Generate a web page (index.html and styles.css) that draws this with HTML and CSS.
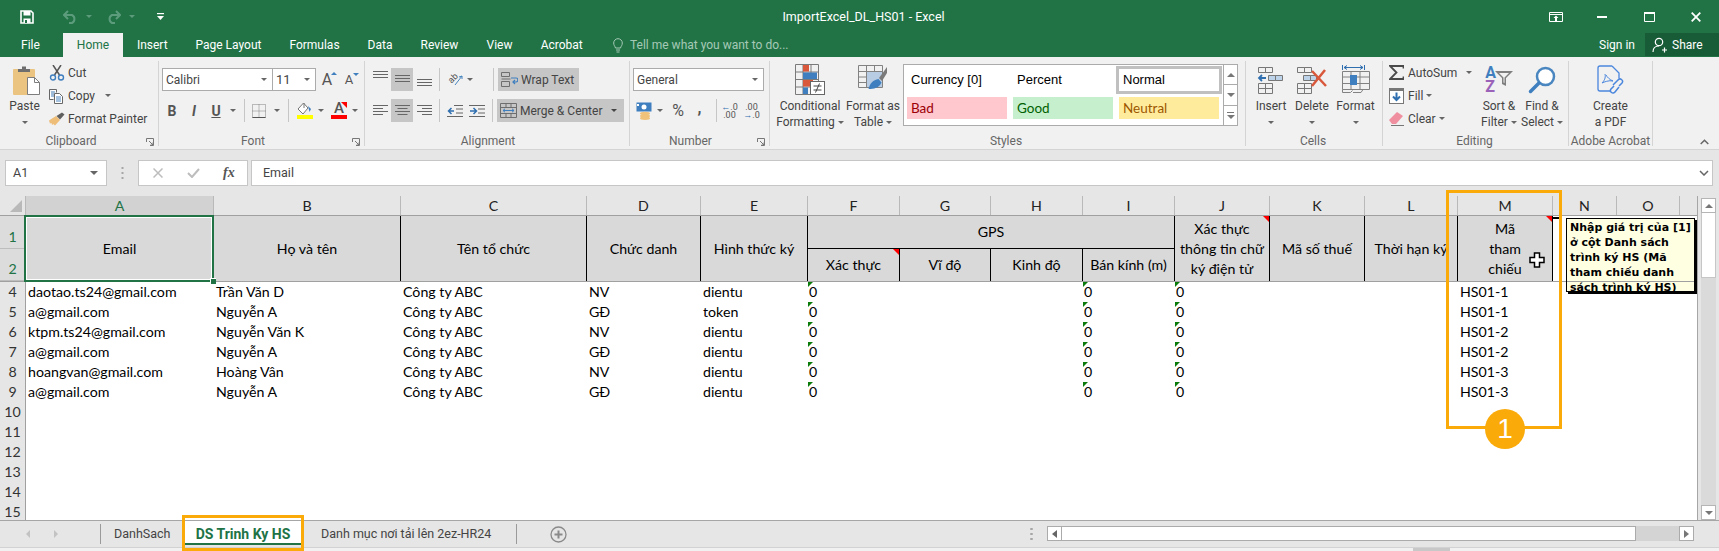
FILE: index.html
```html
<!DOCTYPE html>
<html lang="vi">
<head>
<meta charset="utf-8">
<title>ImportExcel_DL_HS01 - Excel</title>
<link rel="stylesheet" href="styles.css">
</head>
<body>
<div class="page">
  <header class="titlebar">
    <div class="qat">
      <svg class="i-save" width="14" height="14" viewBox="0 0 14 14"><path d="M1 1h10l2 2v10H1z" fill="none" stroke="#fff" stroke-width="1.6"/><rect x="3.5" y="1" width="7" height="4.5" fill="#fff"/><rect x="3.5" y="8.5" width="7" height="4.5" fill="#fff"/><rect x="5" y="10" width="2" height="3" fill="#217346"/></svg>
      <svg class="i-undo" width="15" height="14" viewBox="0 0 15 14"><path d="M5 1 1 5l4 4M1.5 5H9a4.5 4.5 0 0 1 0 8H6" fill="none" stroke="#5c9c7c" stroke-width="2"/></svg>
      <span class="caret dim"></span>
      <svg class="i-redo" width="15" height="14" viewBox="0 0 15 14"><path d="M10 1l4 4-4 4M13.500 5H6a4.500 4.500 0 0 0 0 8h3" fill="none" stroke="#5c9c7c" stroke-width="2"/></svg>
      <span class="caret dim"></span>
      <svg class="i-custom" width="7" height="7" viewBox="0 0 7 7"><rect x="0" y="0" width="7" height="1.200" fill="#fff"/><path d="M0 3h7L3.500 7z" fill="#fff"/></svg>
    </div>
    <div class="doc-title">ImportExcel_DL_HS01 - Excel</div>
    <div class="winctl">
      <svg class="w-display" width="14" height="10" viewBox="0 0 14 10"><path d="M.5.500h13v9H.5zM.5 2.500h13" fill="none" stroke="#fff"/><path d="M7 3.500 4.500 6H6v3h2V6h1.500z" fill="#fff"/></svg>
      <svg class="w-min" width="10" height="2" viewBox="0 0 10 2"><rect width="10" height="2" fill="#fff"/></svg>
      <svg class="w-max" width="11" height="10" viewBox="0 0 11 10"><path d="M.5.500h10v9H.5z" fill="none" stroke="#fff"/><rect width="11" height="2" fill="#fff"/></svg>
      <svg class="w-close" width="10" height="10" viewBox="0 0 10 10"><path d="M.7.700l8.600 8.600M9.300.700.700 9.300" stroke="#fff" stroke-width="1.800"/></svg>
    </div>
  </header>

  <nav class="tabbar">
    <span class="rtab t-file">File</span>
    <span class="rtab t-home">Home</span>
    <span class="rtab t-ins">Insert</span>
    <span class="rtab t-page">Page Layout</span>
    <span class="rtab t-form">Formulas</span>
    <span class="rtab t-data">Data</span>
    <span class="rtab t-rev">Review</span>
    <span class="rtab t-view">View</span>
    <span class="rtab t-acro">Acrobat</span>
    <span class="tellme">
      <svg width="10" height="15" viewBox="0 0 10 15"><path d="M2.500 10C2 8 .7 7.500.7 5a4.300 4.300 0 0 1 8.600 0c0 2.500-1.300 3-1.800 5zM3 12h4M3.500 14h3" fill="none" stroke="#a6c9b6"/></svg>
      Tell me what you want to do...
    </span>
    <span class="signin">Sign in</span>
    <span class="share">
      <svg width="16" height="16" viewBox="0 0 16 16"><circle cx="7" cy="5" r="3.700" fill="none" stroke="#fff" stroke-width="1.200"/><path d="M1 15c0-4 2.500-6 6-6M10 13h5M12.500 10.500v5" fill="none" stroke="#fff" stroke-width="1.200"/></svg>
      Share
    </span>
  </nav>

  <section class="ribbon">
    <div class="group g-clip">
      <div class="gbody">
        <div class="lbtn b-paste">
          <div class="licon">
            <svg width="28" height="30" viewBox="0 0 28 30"><rect x="0" y="4" width="22" height="26" rx="1" fill="#ecc482"/><path d="M5 7V4h4V1.500h4V4h4v3z" fill="#6e6e6e"/><path d="M14.500 12.500h7l5 5v12h-12z" fill="#fff" stroke="#7d7d7d"/><path d="M21.500 12.500v5h5" fill="none" stroke="#7d7d7d"/></svg>
          </div>
          <div class="ltext">Paste</div>
          <div class="ltext"><span class="caret"></span></div>
        </div>
        <div class="stack s-clip">
          <div class="sbtn"><svg width="16" height="16" viewBox="0 0 16 16"><path d="M4 0l6.500 10M12 0 5.500 10" stroke="#555" stroke-width="1.500" fill="none"/><circle cx="4" cy="12.500" r="2.500" fill="none" stroke="#3f7fbf" stroke-width="1.400"/><circle cx="12" cy="12.500" r="2.500" fill="none" stroke="#3f7fbf" stroke-width="1.400"/></svg><span>Cut</span></div>
          <div class="sbtn"><svg width="16" height="16" viewBox="0 0 16 16"><path d="M.5 1.500h7v3M.5 1.500v10h4" fill="#fff" stroke="#666"/><path d="M5.500 5.500h5l3 3v7h-8z" fill="#fff" stroke="#666"/><path d="M7 9h5M7 11h5M7 13h5M2 4h4M2 6h3M2 8h3" stroke="#4a86c0"/></svg><span>Copy</span><span class="caret c-copy"></span></div>
          <div class="sbtn"><svg width="16" height="14" viewBox="0 0 16 14"><path d="M0 8.500 7 4l4 4-5 5.500C5 13 4.500 12 4.500 12L3 13 2.500 11 1 11.500z" fill="#eebd77"/><path d="M7.500 4 11 7.500 15.500 2.500 13 .5z" fill="#5f5f5f"/></svg><span>Format Painter</span></div>
        </div>
      </div>
      <div class="glabel p16">Clipboard<svg class="launcher" width="8" height="8" viewBox="0 0 8 8"><path d="M.5 4V.5H7.500V7.500H4M3 3l4 4M4.500 7h2.500V4.500" fill="none" stroke="#777"/></svg></div>
    </div>

    <div class="group g-font">
      <div class="gbody col">
        <div class="frow">
          <div class="combo w-font">Calibri<span class="caret"></span></div>
          <div class="combo w-size">11<span class="caret"></span></div>
          <span class="bigA a-grow">A<i class="tip up"></i></span>
          <span class="bigA a-shrink">A<i class="tip down"></i></span>
        </div>
        <div class="frow r2">
          <b class="fmt f1">B</b>
          <i class="fmt f1 it">I</i>
          <u class="fmt f1">U</u>
          <span class="cslot"><span class="caret"></span></span>
          <span class="vsep s-a"></span>
          <svg class="i-border" width="14" height="14" viewBox="0 0 14 14"><path d="M.5.500h13v13H.5zM7 .5v13M.5 7h13" fill="none" stroke="#808080" stroke-dasharray="1 1"/><path d="M.5 13.500h13" stroke="#555"/></svg>
          <span class="cslot c-b"><span class="caret"></span></span>
          <span class="vsep s-b"></span>
          <span class="colored c-fill"><svg width="16" height="12" viewBox="0 0 16 12"><path d="M6.500 0 1 6l5 5 5-6z" fill="#fff" stroke="#777"/><path d="M7 0v5" stroke="#777"/><path d="M11 3l3 3-1.500 3z" fill="#3f7fbf"/></svg><i class="bar yellow"></i></span>
          <span class="cslot c-c"><span class="caret"></span></span>
          <span class="colored c-txt"><span class="uA">A</span><i class="bar red"></i></span>
          <span class="cslot c-c"><span class="caret"></span></span>
        </div>
      </div>
      <div class="glabel p17">Font<svg class="launcher" width="8" height="8" viewBox="0 0 8 8"><path d="M.5 4V.5H7.500V7.500H4M3 3l4 4M4.500 7h2.500V4.500" fill="none" stroke="#777"/></svg></div>
    </div>

    <div class="group g-align">
      <div class="gbody col">
        <div class="arow">
          <span class="abtn"><svg width="15" height="9" viewBox="0 0 15 9" class="top"><path d="M0 .5h15M0 3.500h15M0 6.500h15" stroke="#666"/></svg></span>
          <span class="abtn on"><svg width="15" height="9" viewBox="0 0 15 9"><path d="M0 .5h15M0 3.500h15M0 6.500h15" stroke="#666"/></svg></span>
          <span class="abtn"><svg width="15" height="9" viewBox="0 0 15 9" class="bot"><path d="M0 .5h15M0 3.500h15M0 6.500h15" stroke="#666"/></svg></span>
          <span class="vsep s-c"></span>
          <span class="orient"><span class="ab">ab</span><svg width="16" height="15" viewBox="0 0 16 15"><path d="M8 13 15 4M15 4l-3 1M15 4v3" fill="none" stroke="#4a86c0"/></svg></span>
          <span class="cslot c-o"><span class="caret"></span></span>
          <span class="vsep s-d"></span>
          <span class="greybtn wrapb"><svg width="17" height="15" viewBox="0 0 17 15"><path d="M.5.500h8v4h-8zM.5 9.500h8v5h-8zM.5 7h9" fill="none" stroke="#6e6e6e"/><path d="M10 6h5c2.500 0 2.500 4 0 4h-3m2-2-2 2 2 2" fill="none" stroke="#3f7fbf" stroke-width="1.200"/></svg>Wrap Text</span>
        </div>
        <div class="arow r2">
          <span class="abtn"><svg width="15" height="11" viewBox="0 0 15 11"><path d="M0 .5h15M0 3.500h10M0 6.500h15M0 9.500h10" stroke="#666"/></svg></span>
          <span class="abtn on"><svg width="15" height="11" viewBox="0 0 15 11"><path d="M0 .5h15M2.500 3.500h10M0 6.500h15M2.500 9.500h10" stroke="#666"/></svg></span>
          <span class="abtn"><svg width="15" height="11" viewBox="0 0 15 11"><path d="M0 .5h15M5 3.500h10M0 6.500h15M5 9.500h10" stroke="#666"/></svg></span>
          <span class="vsep s-c"></span>
          <span class="abtn ind"><svg width="16" height="12" viewBox="0 0 16 12"><path d="M0 11.500h16M7 .5h9M9 4h7M9 8h7" stroke="#666"/><path d="M7 6H2M4.500 3 1.500 6l3 3" stroke="#2f6fb0" stroke-width="1.500" fill="none"/></svg></span>
          <span class="abtn ind"><svg width="16" height="12" viewBox="0 0 16 12"><path d="M0 11.500h16M0 .5h16M9 4h7M9 8h7" stroke="#666"/><path d="M1 6h6M4.500 3l3 3-3 3" stroke="#2f6fb0" stroke-width="1.500" fill="none"/></svg></span>
          <span class="vsep s-e"></span>
          <span class="greybtn mergeb"><svg width="17" height="15" viewBox="0 0 17 15"><path d="M.5.500h16v14H.5zM.5 4.500h16M.5 10.500h16M6 .5v4M11 .5v4M6 10.500v4M11 10.500v4" fill="none" stroke="#6e6e6e"/><path d="M3 7.500h11M5 5.800 3 7.500l2 1.700M12 5.800l2 1.700-2 1.700" fill="none" stroke="#3f7fbf"/></svg>Merge &amp; Center<span class="caret dark"></span></span>
        </div>
      </div>
      <div class="glabel p18">Alignment</div>
    </div>

    <div class="group g-num">
      <div class="gbody col">
        <div class="combo w-general">General<span class="caret"></span></div>
        <div class="nrow">
          <svg class="i-acct" width="16" height="18" viewBox="0 0 16 18"><rect x=".5" y=".5" width="15" height="9" fill="#3f7fbf"/><circle cx="8" cy="5" r="2.500" fill="#fff"/><rect x="1" y="2" width="2" height="2" fill="#fff"/><ellipse cx="9" cy="11.500" rx="5" ry="1.700" fill="#f0c27a"/><ellipse cx="9" cy="14" rx="5" ry="1.700" fill="#f0c27a"/><ellipse cx="9" cy="16.300" rx="5" ry="1.700" fill="#f0c27a"/></svg>
          <span class="cslot c-n"><span class="caret"></span></span>
          <span class="numsym pct">%</span>
          <span class="numsym comma">,</span>
          <span class="vsep s-f"></span>
          <span class="dec d1"><span><em>←</em>.0</span><span>.00</span></span>
          <span class="dec d2"><span>.00</span><span><em>→</em>.0</span></span>
        </div>
      </div>
      <div class="glabel p18">Number<svg class="launcher" width="8" height="8" viewBox="0 0 8 8"><path d="M.5 4V.5H7.500V7.500H4M3 3l4 4M4.500 7h2.500V4.500" fill="none" stroke="#777"/></svg></div>
    </div>

    <div class="group g-styles">
      <div class="gbody">
        <div class="lbtn b-cf">
          <div class="licon"><svg width="30" height="31" viewBox="0 0 30 31"><path d="M.5.500h23v30H.5zM8 .5v30M16 .5v30M.5 8h23M.5 15.500h23M.5 23h23" fill="none" stroke="#7a7a7a"/><rect x="8" y="1" width="6" height="6.500" fill="#d9583b"/><rect x="8" y="8.500" width="14" height="6.500" fill="#3f7fbf"/><rect x="8" y="16" width="10" height="6.500" fill="#d9583b"/><rect x="8" y="23.500" width="5" height="6.500" fill="#3f7fbf"/><rect x="15.500" y="17.500" width="14" height="13" fill="#fff" stroke="#666"/><path d="M18.500 22h8M18.500 26h8M24.500 19.500 20.500 28.500" stroke="#444" fill="none"/></svg></div>
          <div class="ltext">Conditional</div>
          <div class="ltext">Formatting<span class="caret in"></span></div>
        </div>
        <div class="lbtn b-fat">
          <div class="licon"><svg width="30" height="31" viewBox="0 0 30 31"><path d="M.5 1.500h24v22H.5zM.5 7.500h24M.5 13h24M.5 18.500h24M8.500 1.500v22M16.500 1.500v22" fill="none" stroke="#828282"/><rect x="9" y="8" width="15" height="15" fill="#b8cce4"/><path d="M29 3 21 14l3 3 5-8z" fill="#7a7a7a"/><path d="M20.500 15C15 16 12 19 10.500 25c5 0 11-1 13-6.500z" fill="#3f7fbf"/></svg></div>
          <div class="ltext">Format as</div>
          <div class="ltext">Table<span class="caret in"></span></div>
        </div>
        <div class="gallery">
          <div class="gcells">
            <div class="st st-plain">Currency [0]</div>
            <div class="st st-plain">Percent</div>
            <div class="st st-normal">Normal</div>
            <div class="st st-bad">Bad</div>
            <div class="st st-good">Good</div>
            <div class="st st-neutral">Neutral</div>
          </div>
          <div class="gscroll">
            <span><i class="tri-up"></i></span>
            <span><i class="tri-down"></i></span>
            <span class="more"><i class="bar-more"></i><i class="tri-down"></i></span>
          </div>
        </div>
      </div>
      <div class="glabel p3">Styles</div>
    </div>

    <div class="group g-cells">
      <div class="gbody">
        <div class="lbtn b-ins">
          <div class="licon"><svg width="28" height="28" viewBox="0 0 28 28"><path d="M1.500 1.500h7v5h-7zM8.500 1.500h7v5h-7zM1.500 17.500h7v5h-7zM8.500 17.500h7v5h-7zM1.500 22.500h7v5h-7zM8.500 22.500h7v5h-7z" fill="none" stroke="#777"/><path d="M11.500 9.500h7v5h-7zM18.500 9.500h7v5h-7z" fill="#bcd3ea" stroke="#777"/><path d="M9 12H2M5 9l-3 3 3 3" fill="none" stroke="#2f6fb0" stroke-width="1.800"/></svg></div>
          <div class="ltext">Insert</div>
          <div class="ltext"><span class="caret"></span></div>
        </div>
        <div class="lbtn b-del">
          <div class="licon"><svg width="30" height="28" viewBox="0 0 30 28"><path d="M.5 1.500h7v5h-7zM7.500 1.500h7v5h-7zM.5 17.500h7v5h-7zM7.500 17.500h7v5h-7zM.5 22.500h7v5h-7zM7.500 22.500h7v5h-7z" fill="none" stroke="#777"/><path d="M6.500 9.500h7v5h-7zM13.500 9.500h6v5h-6z" fill="#bcd3ea" stroke="#777"/><path d="M15 5 29 20M28 4 15 20" stroke="#d9583b" stroke-width="2.500"/></svg></div>
          <div class="ltext">Delete</div>
          <div class="ltext"><span class="caret"></span></div>
        </div>
        <div class="lbtn b-fmt">
          <div class="licon"><svg width="28" height="32" viewBox="0 0 28 32"><path d="M.5 1v5M22.500 1v5M2 3.500h19M5 1.500 2 3.500l3 2M18 1.500l3 2-3 2" fill="none" stroke="#2f6fb0"/><path d="M.5 7.500h27v18H.5zM9 7.500v18M18 7.500v18M.5 13h27M.5 19.500h27M.5 25.500v3h8l2-2M11 28.500h8l2-3" fill="none" stroke="#828282"/><rect x="8" y="11" width="7" height="10" fill="#3f7fbf"/></svg></div>
          <div class="ltext">Format</div>
          <div class="ltext"><span class="caret"></span></div>
        </div>
      </div>
      <div class="glabel p2">Cells</div>
    </div>

    <div class="group g-edit">
      <div class="gbody">
        <div class="stack s-edit">
          <div class="sbtn"><svg width="15" height="15" viewBox="0 0 15 15"><path d="M14.500 3.500V1H1l6.500 6.500L1 14h13.500v-2.500" fill="none" stroke="#4a4a4a" stroke-width="1.800"/></svg><span>AutoSum</span><span class="caret c-sum"></span></div>
          <div class="sbtn"><svg width="15" height="16" viewBox="0 0 15 16"><rect x=".5" y=".5" width="14" height="15" fill="#fff" stroke="#777"/><rect x="0" y="0" width="15" height="3" fill="#777"/><path d="M7.500 4.500v7M4 8.500l3.500 3.500L11 8.500" fill="none" stroke="#2f6fb0" stroke-width="2"/></svg><span>Fill</span><span class="caret in"></span></div>
          <div class="sbtn"><svg width="15" height="14" viewBox="0 0 15 14"><path d="M0 8 8 0l6 4-7 8H3z" fill="#ef8f9f"/><path d="M2 13.500h13" stroke="#777"/></svg><span>Clear</span><span class="caret in"></span></div>
        </div>
        <div class="lbtn b-sort">
          <div class="licon">
            <span class="azcol"><span class="a">A</span><span class="z">Z</span></span>
            <svg class="funnel" width="18" height="15" viewBox="0 0 18 15"><path d="M0 0h18l-7 7v8l-4-2V7z" fill="#7f7f7f"/><path d="M4 2h10L9.500 6.500v5.500l-1-.5V6.500z" fill="#f1f1f1"/></svg>
          </div>
          <div class="ltext">Sort &amp;</div>
          <div class="ltext">Filter<span class="caret in"></span></div>
        </div>
        <div class="lbtn b-find">
          <div class="licon"><svg width="28" height="28" viewBox="0 0 28 28"><circle cx="17.500" cy="10.500" r="8.500" fill="#fff" stroke="#4a86c0" stroke-width="2.500"/><path d="M11 17 2.500 25.500" stroke="#3f7fbf" stroke-width="3.500" stroke-linecap="round"/></svg></div>
          <div class="ltext">Find &amp;</div>
          <div class="ltext">Select<span class="caret in"></span></div>
        </div>
      </div>
      <div class="glabel p2">Editing</div>
    </div>

    <div class="group g-pdf">
      <div class="gbody">
        <div class="lbtn b-pdf">
          <div class="licon"><svg width="27" height="29" viewBox="0 0 27 29"><path d="M15 1H3a2 2 0 0 0-2 2v21a2 2 0 0 0 2 2h10M15 1l7 7v5" fill="none" stroke="#4a86dd" stroke-width="1.300"/><path d="M8 9c1 4-1 7-3 9 2-1 7-3 11-2-3-1-6-4-7-6" fill="none" stroke="#4a86dd"/><path d="M16 20l5-5a2.400 2.400 0 0 1 4 3l-3 3M22 22l-4 5a2.400 2.400 0 0 1-4-3l3-3" fill="none" stroke="#4a86dd" stroke-width="1.500"/></svg></div>
          <div class="ltext">Create</div>
          <div class="ltext">a PDF</div>
        </div>
      </div>
      <div class="glabel">Adobe Acrobat</div>
    </div>
    <svg class="collapse" width="9" height="6" viewBox="0 0 9 6"><path d="M.7 5 4.500 1.300 8.300 5" fill="none" stroke="#666" stroke-width="1.500"/></svg>
  </section>

  <section class="formula">
    <div class="fbox namebox">A1<span class="caret"></span></div>
    <svg class="dots" width="3" height="12" viewBox="0 0 3 12"><path d="M1.500 0v2M1.500 5v2M1.500 10v2" stroke="#a6a6a6" stroke-width="2"/></svg>
    <div class="fbox fnbox">
      <svg width="10" height="10" viewBox="0 0 10 10"><path d="M.5.500l9 9M9.500.500l-9 9" stroke="#bdbdbd" stroke-width="1.500"/></svg>
      <svg width="13" height="10" viewBox="0 0 13 10"><path d="M1 5l4 4 7-8" fill="none" stroke="#bdbdbd" stroke-width="2"/></svg>
      <span class="fx">fx</span>
    </div>
    <div class="fbox inputbox">Email<svg width="10" height="6" viewBox="0 0 10 6"><path d="M1 1l4 4 4-4" fill="none" stroke="#666" stroke-width="1.500"/></svg></div>
  </section>

  <section class="workarea">
    <div class="sheet">
      <div class="colhead">
        <div class="corner"><i></i></div>
        <div class="ch sel">A</div><div class="ch">B</div><div class="ch">C</div><div class="ch">D</div><div class="ch">E</div><div class="ch">F</div><div class="ch">G</div><div class="ch">H</div><div class="ch">I</div><div class="ch">J</div><div class="ch">K</div><div class="ch">L</div><div class="ch">M</div><div class="ch">N</div><div class="ch">O</div><div class="ch blank"></div>
      </div>
      <div class="headrows">
        <div class="rh rh-sel r1">1</div>
        <div class="rh rh-sel r2">2</div>
        <div class="hc cA tall">Email</div>
        <div class="hc cB tall">Họ và tên</div>
        <div class="hc cC tall">Tên tổ chức</div>
        <div class="hc cD tall">Chức danh</div>
        <div class="hc cE tall">Hình thức ký</div>
        <div class="hc gps">GPS</div>
        <div class="hc cF sub red">Xác thực</div>
        <div class="hc cG sub">Vĩ độ</div>
        <div class="hc cH sub">Kinh độ</div>
        <div class="hc cI sub">Bán kính (m)</div>
        <div class="hc cJ tall red wrap">Xác thực<br>thông tin chữ<br>ký điện tử</div>
        <div class="hc cK tall">Mã số thuế</div>
        <div class="hc cL tall">Thời hạn ký</div>
        <div class="hc cM tall red wrap">Mã<br>tham<br>chiếu</div>
      </div>
      <div class="row"><div class="rh">4</div><div class="d cA">daotao.ts24@gmail.com</div><div class="d cB">Trần Văn D</div><div class="d cC">Công ty ABC</div><div class="d cD">NV</div><div class="d cE">dientu</div><div class="d cF g">0</div><div class="d cI g">0</div><div class="d cJ g">0</div><div class="d cM">HS01-1</div></div>
      <div class="row"><div class="rh">5</div><div class="d cA">a@gmail.com</div><div class="d cB">Nguyễn A</div><div class="d cC">Công ty ABC</div><div class="d cD">GĐ</div><div class="d cE">token</div><div class="d cF g">0</div><div class="d cI g">0</div><div class="d cJ g">0</div><div class="d cM">HS01-1</div></div>
      <div class="row"><div class="rh">6</div><div class="d cA">ktpm.ts24@gmail.com</div><div class="d cB">Nguyễn Văn K</div><div class="d cC">Công ty ABC</div><div class="d cD">NV</div><div class="d cE">dientu</div><div class="d cF g">0</div><div class="d cI g">0</div><div class="d cJ g">0</div><div class="d cM">HS01-2</div></div>
      <div class="row"><div class="rh">7</div><div class="d cA">a@gmail.com</div><div class="d cB">Nguyễn A</div><div class="d cC">Công ty ABC</div><div class="d cD">GĐ</div><div class="d cE">dientu</div><div class="d cF g">0</div><div class="d cI g">0</div><div class="d cJ g">0</div><div class="d cM">HS01-2</div></div>
      <div class="row"><div class="rh">8</div><div class="d cA">hoangvan@gmail.com</div><div class="d cB">Hoàng Vân</div><div class="d cC">Công ty ABC</div><div class="d cD">NV</div><div class="d cE">dientu</div><div class="d cF g">0</div><div class="d cI g">0</div><div class="d cJ g">0</div><div class="d cM">HS01-3</div></div>
      <div class="row"><div class="rh">9</div><div class="d cA">a@gmail.com</div><div class="d cB">Nguyễn A</div><div class="d cC">Công ty ABC</div><div class="d cD">GĐ</div><div class="d cE">dientu</div><div class="d cF g">0</div><div class="d cI g">0</div><div class="d cJ g">0</div><div class="d cM">HS01-3</div></div>
      <div class="row"><div class="rh">10</div></div>
      <div class="row"><div class="rh">11</div></div>
      <div class="row"><div class="rh">12</div></div>
      <div class="row"><div class="rh">13</div></div>
      <div class="row"><div class="rh">14</div></div>
      <div class="row last"><div class="rh">15</div></div>
    </div>
    <div class="vscroll">
      <span class="arrowbtn"><i class="tri-up"></i></span>
      <span class="thumb"></span>
      <span class="track"></span>
      <span class="arrowbtn"><i class="tri-down"></i></span>
    </div>
  </section>

  <section class="sheetbar">
    <span class="nav"><i class="tl"></i><i class="tr"></i></span>
    <span class="sep"></span>
    <span class="stab s1">DanhSach</span>
    <span class="stab active">DS Trinh Ky HS</span>
    <span class="stab s3">Danh mục nơi tải lên 2ez-HR24</span>
    <span class="sep"></span>
    <svg class="plus" width="17" height="17" viewBox="0 0 17 17"><circle cx="8.500" cy="8.500" r="7.500" fill="none" stroke="#8a8a8a" stroke-width="1.300"/><path d="M8.500 4.500v8M4.500 8.500h8" stroke="#8a8a8a" stroke-width="2"/></svg>
    <svg class="grip" width="3" height="12" viewBox="0 0 3 12"><path d="M1.500 0v2M1.500 5v2M1.500 10v2" stroke="#a6a6a6" stroke-width="2.500"/></svg>
    <div class="hscroll">
      <span class="harrow"><i class="tl dark"></i></span>
      <span class="hthumb"></span>
      <span class="htrack"></span>
      <span class="harrow"><i class="tr dark"></i></span>
    </div>
  </section>
  <footer class="status"><span class="seg"></span></footer>

  <div class="selection"><i class="handle"></i></div>
  <div class="indicator"></div>
  <aside class="comment">Nhập giá trị của [1] ở cột Danh sách trình ký HS (Mã tham chiếu danh sách trình ký HS)</aside>
  <svg class="cursor" width="16" height="16" viewBox="0 0 16 16"><path d="M5.500 1h5v4.500H15v5h-4.500V15h-5v-4.500H1v-5h4.500z" fill="#fff" stroke="#000" stroke-width="1.500"/></svg>
  <div class="hl hl-col"></div>
  <div class="hl hl-tab"></div>
  <div class="badge">1</div>
</div>
</body>
</html>
```

FILE: styles.css
```css
* { box-sizing: border-box; }
html, body { margin: 0; padding: 0; }
body { background: #fff; }
.page {
  position: relative; width: 1719px; height: 551px; overflow: hidden;
  font: 12px/16px Roboto, "Noto Sans", sans-serif; color: #444;
  --cols: 26px 188px 187px 186px 114px 107px 92px 91px 92px 92px 95px 95px 93px 95px 64px 63px 17px;
}
i, em { font-style: normal; }

.caret { display: inline-block; width: 0; height: 0; border: 3px solid transparent; border-top: 3.5px solid #666; border-bottom: 0; vertical-align: middle; }
.caret.dim { border-top-color: #5c9c7c; }
.caret.dark { border-top-color: #444; }
.caret.in { margin-left: 3px; }

/* title bar */
.titlebar { height: 33px; background: #217346; color: #fff; display: grid; grid-template-columns: 1fr auto 1fr; align-items: center; }
.qat { display: flex; align-items: center; padding-left: 20px; }
.i-undo { margin-left: 29px; }
.qat .caret { margin-left: 8px; }
.i-redo { margin-left: 14px; }
.i-custom { margin-left: 22px; }
.doc-title { font-size: 12.500px; padding-left: 8px; }
.winctl { display: flex; align-items: center; justify-content: flex-end; padding-right: 18px; }
.w-min { margin-left: 34px; }
.w-max { margin-left: 37px; }
.w-close { margin-left: 36px; }

.tabbar { height: 24px; background: #217346; color: #fff; display: flex; align-items: stretch; }
.rtab { line-height: 24px; height: 24px; text-align: center; flex: none; }
.t-file { width: 63px; padding-left: 21px; text-align: left; }
.t-home { background: #f1f1f1; color: #217346; width: 60px; }
.t-ins { width: 58.500px; }
.t-page { width: 94px; }
.t-form { width: 78px; }
.t-data { width: 53px; }
.t-rev { width: 66px; }
.t-view { width: 54px; }
.t-acro { width: 70.500px; }
.tellme { display: flex; align-items: center; gap: 7px; margin-left: 16px; color: #a6c9b6; }
.signin { margin-left: auto; line-height: 24px; }
.share { margin-left: 10px; width: 74px; height: 23px; background: #185c37; display: flex; align-items: center; gap: 4px; padding-left: 7px; }

/* ribbon */
.ribbon { height: 93px; background: #f1f1f1; border-bottom: 1px solid #d4d4d4; padding: 4px 0 3px; display: flex; position: relative; }
.group { border-right: 1px solid #d4d4d4; height: 85px; display: flex; flex-direction: column; flex: none; }
.g-clip { width: 159px; }
.g-font { width: 206px; }
.g-align { width: 265px; }
.g-num { width: 140px; }
.g-styles { width: 476px; }
.g-cells { width: 137px; }
.g-edit { width: 186px; }
.g-pdf { width: 84px; }
.gbody { height: 72px; display: flex; }
.gbody.col { flex-direction: column; }
.glabel { position: relative; height: 13px; line-height: 16px; text-align: center; color: #666; font-size: 12px; white-space: nowrap; }
.p16 { padding-right: 16px; }
.p17 { padding-right: 17px; }
.p18 { padding-right: 18px; }
.p3 { padding-right: 3px; }
.p2 { padding-right: 2px; }
.launcher { position: absolute; right: 4px; top: 5px; }
.collapse { position: absolute; left: 1700px; top: 82px; }

.lbtn { display: flex; flex-direction: column; align-items: center; flex: none; }
.licon { height: 37px; display: flex; align-items: center; justify-content: center; }
.ltext { height: 16px; line-height: 16px; white-space: nowrap; }
.b-paste { width: 49px; }
.b-paste .licon { padding-left: 4px; }
.stack { display: flex; flex-direction: column; flex: none; }
.sbtn { height: 23px; display: flex; align-items: center; white-space: nowrap; }
.sbtn svg { flex: none; }
.s-clip .sbtn svg { margin-right: 3px; }
.c-copy { margin-left: 10px; }

.frow { display: flex; align-items: center; height: 23px; margin-top: 7px; padding-left: 3px; }
.frow.r2 { margin-top: 8px; padding-left: 2px; }
.combo { height: 23px; background: #fff; border: 1px solid #ababab; color: #444; padding-left: 3px; display: flex; align-items: center; justify-content: space-between; padding-right: 5px; flex: none; font-size: 12px; }
.w-font { width: 111px; }
.w-size { width: 44px; margin-left: -1px; font-size: 13px; }
.bigA { position: relative; color: #555; font-size: 16px; text-align: center; width: 22px; }
.a-shrink { font-size: 13px; }
.tip { position: absolute; right: 1px; top: 0; width: 0; height: 0; border: 3px solid transparent; }
.tip.up { border-bottom: 3px solid #3f7fbf; border-top: 0; }
.tip.down { border-top: 3px solid #3f7fbf; border-bottom: 0; top: 1px; }
.fmt { width: 22px; text-align: center; font-size: 14px; color: #555; font-weight: 700; flex: none; font-family: Roboto, sans-serif; }
.it { font-style: italic; }
.cslot { width: 12px; display: flex; justify-content: center; flex: none; }
.vsep { width: 1px; height: 23px; background: #c6c6c6; flex: none; }
.s-a { margin-left: 5px; }
.i-border { margin-left: 7px; flex: none; }
.c-b { margin-left: 5px; }
.s-b { margin-left: 5px; }
.colored { width: 16px; display: flex; flex-direction: column; align-items: center; flex: none; position: relative; }
.c-fill { margin-left: 8px; }
.c-txt { margin-left: 4px; }
.c-c { margin: 0 0 0 2px; }
.bar { display: block; width: 16px; height: 4px; }
.yellow { background: #ffff00; }
.red { background: #f00; }
.uA { font-size: 15px; line-height: 13px; color: #555; font-weight: 500; }

.arow { display: flex; align-items: center; height: 23px; margin-top: 7px; padding-left: 4px; }
.arow.r2 { margin-top: 8px; }
.abtn { width: 22px; height: 23px; display: flex; align-items: center; justify-content: center; flex: none; }
.abtn.on { background: #c6c6c6; }
.top { margin-bottom: 8px; }
.bot { margin-top: 8px; }
.s-c { margin-left: 4px; }
.orient { position: relative; margin-left: 7px; width: 16px; height: 15px; flex: none; }
.orient svg { display: block; }
.ab { position: absolute; left: 1px; top: 1px; font-size: 9px; line-height: 10px; color: #555; transform: rotate(-45deg); }
.c-o { margin-left: 1px; }
.s-d { margin-left: 17px; }
.s-e { margin-left: 4px; }
.vsep.s-c + .abtn.ind { margin-left: 4px; }
.greybtn { height: 23px; background: #c6c6c6; display: flex; align-items: center; flex: none; white-space: nowrap; padding-left: 3px; }
.greybtn svg { margin-right: 3px; flex: none; }
.wrapb { width: 81px; margin-left: 4px; }
.mergeb { width: 127px; margin-left: 4px; }
.mergeb .caret { margin-left: 9px; }

.w-general { width: 131px; margin: 7px 0 0 3px; }
.nrow { display: flex; align-items: center; height: 23px; margin-top: 8px; padding-left: 6px; }
.i-acct { flex: none; }
.c-n { margin-left: 2px; }
.numsym { color: #555; text-align: center; flex: none; }
.pct { width: 18px; margin-left: 3px; font-size: 16px; }
.comma { width: 14px; margin-left: 5.500px; font-size: 16px; font-weight: 700; margin-top: -6px; }
.s-f { margin-left: 9px; }
.dec { width: 22px; display: flex; flex-direction: column; align-items: center; font-size: 9px; line-height: 8px; color: #555; flex: none; white-space: nowrap; }
.d1 { margin-left: 2px; }
.dec em { color: #2f6fb0; font-weight: 700; }

.b-cf { width: 72px; margin-left: 4px; }
.b-fat { width: 54px; }
.gallery { width: 335px; height: 62px; margin: 3px 0 0 3px; background: #fff; border: 1px solid #ababab; display: flex; flex: none; }
.gcells { width: 319px; padding: 4px 0 0 3px; display: grid; grid-template-columns: repeat(3, 100px); grid-template-rows: 22px 22px; column-gap: 6px; row-gap: 6px; }
.st { padding-left: 4px; line-height: 22px; font-size: 13px; font-family: "Liberation Sans", sans-serif; color: #000; white-space: nowrap; }
.st-normal { outline: 3px solid #c0c0c0; }
.st-bad { background: #ffc7ce; color: #9c0006; }
.st-good { background: #c6efce; color: #006100; }
.st-neutral { background: #ffeb9c; color: #9c5700; }
.st-bad, .st-good, .st-neutral { font-family: Lato, sans-serif; font-size: 13.500px; }
.gscroll { width: 14px; display: flex; flex-direction: column; border-left: 1px solid #ababab; }
.gscroll span { flex: 1; display: flex; flex-direction: column; gap: 2px; align-items: center; justify-content: center; border-bottom: 1px solid #ababab; }
.gscroll span:last-child { border-bottom: 0; }
.tri-up, .tri-down { display: block; width: 0; height: 0; border: 4px solid transparent; }
.tri-up { border-bottom: 4px solid #777; border-top: 0; }
.tri-down { border-top: 4px solid #777; border-bottom: 0; }
.bar-more { display: block; width: 7px; height: 1px; background: #777; }

.b-ins { width: 38px; margin-left: 6px; }
.b-del { width: 44px; }
.b-fmt { width: 43px; }
.s-edit { width: 90px; margin-left: 6px; }
.s-edit .sbtn svg { margin-right: 4px; }
.c-sum { margin-left: 9px; }
.b-sort { width: 40px; }
.b-find { width: 44px; margin-left: 1px; }
.azcol { display: flex; flex-direction: column; font-weight: 700; font-size: 16px; line-height: 14px; margin-right: -1px; }
.azcol .a { color: #3f7fbf; }
.azcol .z { color: #9a62b8; }
.funnel { flex: none; margin-top: -3px; }
.b-pdf { width: 83px; }

/* formula */
.formula { height: 46px; background: #e6e6e6; padding: 10px 6px 10px 5px; display: flex; align-items: stretch; }
.fbox { background: #fff; border: 1px solid #c6c6c6; display: flex; align-items: center; flex: none; height: 26px; font-size: 12.500px; }
.namebox { width: 102px; padding: 0 8px 0 7px; justify-content: space-between; }
.namebox .caret { border-width: 4px; border-top-width: 4px; }
.dots { align-self: center; margin: 0 14px 0 14px; flex: none; }
.fnbox { width: 110px; padding-left: 14px; gap: 24px; }
.fx { font: italic 700 14px "Liberation Serif", serif; color: #555; margin-left: -1px; }
.inputbox { flex: 1; margin-left: 3px; padding: 0 3px 0 11px; justify-content: space-between; }

/* sheet */
.workarea { height: 324px; background: #e6e6e6; display: flex; }
.sheet { width: 1698px; background: #fff; border-right: 1px solid #a6a6a6; font: 14.200px/20px Lato, "Noto Sans", sans-serif; color: #000; flex: none; }
.colhead, .headrows, .row { display: grid; grid-template-columns: var(--cols); }
.colhead { height: 20px; background: #e6e6e6; border-bottom: 1px solid #a0a0a0; }
.corner { position: relative; border-right: 1px solid #b9b9b9; }
.corner i { position: absolute; left: 10px; top: 4px; width: 0; height: 0; border-left: 12px solid transparent; border-bottom: 12px solid #b9b9b9; }
.ch { text-align: center; line-height: 19px; border-right: 1px solid #b9b9b9; color: #222; }
.ch.blank { border-right: 0; }
.ch.sel { background: #d2d2d2; color: #217346; }
.headrows { grid-template-rows: 33px 32px; height: 66px; border-bottom: 1px solid #a0a0a0; }
.rh { grid-column: 1; background: #e6e6e6; border-right: 1px solid #a0a0a0; border-bottom: 1px solid #bdbdbd; text-align: center; color: #333; }
.rh-sel { color: #217346; background: #dcdcdc; display: flex; align-items: flex-end; justify-content: center; padding-bottom: 1px; }
.r1 { grid-row: 1; }
.r2 { grid-row: 2; }
.hc { background: #d9d9d9; border-right: 1px solid #000; display: flex; align-items: center; justify-content: center; text-align: center; position: relative; white-space: nowrap; }
.tall { grid-row: 1 / span 2; }
.wrap { line-height: 20px; }
.gps { grid-column: 7 / span 4; grid-row: 1; border-bottom: 1px solid #000; }
.sub { grid-row: 2; }
.cA { grid-column: 2; }
.cB { grid-column: 3; }
.cC { grid-column: 4; }
.cD { grid-column: 5; }
.cE { grid-column: 6; }
.cF { grid-column: 7; }
.cG { grid-column: 8; }
.cH { grid-column: 9; }
.cI { grid-column: 10; }
.cJ { grid-column: 11; }
.cK { grid-column: 12; }
.cL { grid-column: 13; }
.cM { grid-column: 14; }
.hc.cA { border-right-color: transparent; }
.red::after { content: ""; position: absolute; right: 0; top: 0; border-top: 6px solid #f00; border-left: 6px solid transparent; }
.row { height: 20px; }
.row.last { height: 18px; overflow: hidden; }
.row .rh { line-height: 20px; }
.d { padding-left: 2px; white-space: nowrap; position: relative; line-height: 20px; }
.g { padding-left: 1px; }
.g::before { content: ""; position: absolute; left: 0; top: 0; border-top: 5px solid #0a7a0a; border-right: 5px solid transparent; }

.vscroll { margin: 2px 0 0 3px; width: 15px; height: 322px; display: flex; flex-direction: column; background: #dadada; flex: none; }
.arrowbtn { height: 15px; background: #fff; border: 1px solid #b5b5b5; display: flex; align-items: center; justify-content: center; flex: none; }
.thumb { height: 65px; background: #fff; border: 1px solid #c6c6c6; border-top: 0; flex: none; }
.track { flex: 1; }

/* sheet tabs */
.sheetbar { height: 28px; background: #e6e6e6; border-top: 1px solid #a6a6a6; border-bottom: 1px solid #d2d2d2; display: flex; align-items: center; position: relative; }
.nav { width: 100px; display: flex; gap: 24px; padding-left: 26px; align-items: center; }
.tl, .tr { display: block; width: 0; height: 0; border: 4px solid transparent; }
.tl { border-right: 4px solid #c2c2c2; border-left: 0; }
.tr { border-left: 4px solid #c2c2c2; border-right: 0; }
.tl.dark { border-right-color: #666; border-right-width: 5px; }
.tr.dark { border-left-color: #777; border-left-width: 5px; }
.sep { width: 1px; height: 20px; background: #9a9a9a; flex: none; }
.stab { height: 27px; line-height: 26px; color: #444; font-size: 12.500px; white-space: nowrap; flex: none; }
.s1 { width: 84px; padding-left: 13px; }
.active { width: 116px; background: #fff; color: #217346; font-size: 14px; font-weight: 700; text-align: center; border-bottom: 2px solid #217346; height: 24px; align-self: flex-start; }
.s3 { width: 215px; padding-left: 20px; }
.plus { margin-left: 33px; flex: none; }
.grip { margin-left: 463px; flex: none; }
.hscroll { margin-left: 14px; width: 647px; height: 15px; display: flex; background: #d4d4d4; margin-top: -1px; }
.harrow { width: 15px; height: 15px; background: #fff; border: 1px solid #ababab; display: flex; align-items: center; justify-content: center; flex: none; }
.hthumb { width: 574px; background: #fff; border: 1px solid #ababab; border-left: 0; flex: none; }
.htrack { flex: 1; }
.status { height: 3px; background: #f1f1f1; padding-left: 1413px; }
.seg { display: block; width: 37px; height: 3px; background: #c8c8c8; }

/* overlays */
.selection { position: absolute; left: 24px; top: 215px; width: 190px; height: 67px; border: 2px solid #217346; box-shadow: inset 0 0 0 1px #fff; }
.handle { position: absolute; right: -4px; bottom: -4px; width: 6px; height: 6px; background: #217346; border: 1px solid #fff; border-width: 1px 0 0 1px; }
.indicator { position: absolute; left: 1552px; top: 217px; width: 7px; height: 2px; background: #000; }
.comment { position: absolute; left: 1566px; top: 218px; width: 129px; height: 74px; padding: 1px 0 0 3px; background: #ffffe1; border: 1px solid #000; box-shadow: 2px 2px 0 #000; font: 700 11px/15px "DejaVu Sans", sans-serif; color: #000; overflow: hidden; }
.comment::after { content: ""; position: absolute; left: 0; right: 0; top: 62px; height: 1px; background: #a0a0a0; }
.cursor { position: absolute; left: 1529px; top: 252px; }
.hl { position: absolute; border: 3px solid #faab0a; }
.hl-col { left: 1446px; top: 190px; width: 116px; height: 239px; }
.hl-tab { left: 182px; top: 515px; width: 122px; height: 36px; }
.badge { position: absolute; left: 1485px; top: 409px; width: 40px; height: 40px; border-radius: 50%; background: #faab0a; color: #fff; font: 28px/40px "Liberation Sans", sans-serif; text-align: center; }
```
